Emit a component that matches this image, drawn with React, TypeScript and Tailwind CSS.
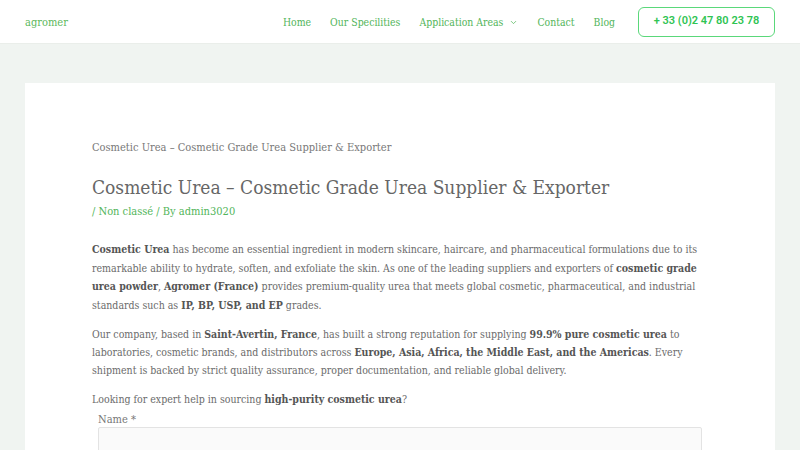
import { ChevronDown } from "lucide-react";

const serif = "[font-family:'DejaVu_Serif_Condensed','DejaVu_Serif',serif]";

function Header() {
  return (
    <header className="flex h-[44px] items-center justify-between border-b border-[#eaeeea] bg-white pl-[25px] pr-[25px]">
      <a className={`${serif} pt-[3px] text-[11px] text-[#5cb85c]`}>agromer</a>
      <nav className="flex items-center">
        <ul className={`${serif} flex items-center gap-[19px] pt-[2px] text-[10.4px] text-[#52b55a]`}>
          <li>Home</li>
          <li>Our Specilities</li>
          <li className="flex items-center gap-[6px]">
            Application Areas
            <ChevronDown className="h-[9px] w-[9px]" strokeWidth={2} />
          </li>
          <li>Contact</li>
          <li>Blog</li>
        </ul>
        <button className="ml-[23px] flex h-[30px] w-[137px] items-center justify-center rounded-[6px] border-[1.5px] border-[#5ad87a] text-[11px] font-semibold text-[#2fc453] [font-family:'Roboto',sans-serif]">
          + 33 (0)2 47 80 23 78
        </button>
      </nav>
    </header>
  );
}

function B({ children }: { children: React.ReactNode }) {
  return <strong className="font-bold text-[#555]">{children}</strong>;
}

export default function App() {
  return (
    <div className={`min-h-[450px] bg-[#f0f4f1] ${serif}`}>
      <Header />
      <main className="px-[25px] pt-[39px]">
        <article className="bg-white px-[67px] pt-[56px] pb-10 text-[10.5px] leading-[18.4px] text-[#6b6b6b]">
          <div className="text-[11px] text-[#777]">
            Cosmetic Urea – Cosmetic Grade Urea Supplier &amp; Exporter
          </div>
          <h1 className="mt-[14px] text-[19px] leading-[32px] text-[#666]">
            Cosmetic Urea – Cosmetic Grade Urea Supplier &amp; Exporter
          </h1>
          <div className="text-[11px] leading-[18px] text-[#52b55a]">
            / Non classé / By admin3020
          </div>
          <div className="mt-[19px] space-y-[10.5px]">
            <p>
              <B>Cosmetic Urea</B> has become an essential ingredient in modern skincare, haircare, and pharmaceutical
              formulations due to its remarkable ability to hydrate, soften, and exfoliate the skin. As one of the
              leading suppliers and exporters of <B>cosmetic grade urea powder</B>, <B>Agromer (France)</B> provides
              premium-quality urea that meets global cosmetic, pharmaceutical, and industrial standards such as{" "}
              <B>IP, BP, USP, and EP</B> grades.
            </p>
            <p>
              Our company, based in <B>Saint-Avertin, France</B>, has built a strong reputation for supplying{" "}
              <B>99.9% pure cosmetic urea</B> to laboratories, cosmetic brands, and distributors across{" "}
              <B>Europe, Asia, Africa, the Middle East, and the Americas</B>. Every shipment is backed by strict
              quality assurance, proper documentation, and reliable global delivery.
            </p>
            <p>
              Looking for expert help in sourcing <B>high-purity cosmetic urea</B>?
            </p>
          </div>
          <form className="mt-[3px] px-[6px]">
            <label className="block text-[11px] leading-[15px] text-[#777]">Name *</label>
            <input
              type="text"
              className="h-[36px] w-full rounded-[2px] border border-[#e3e3e3] bg-[#fafafa]"
            />
          </form>
        </article>
      </main>
    </div>
  );
}
